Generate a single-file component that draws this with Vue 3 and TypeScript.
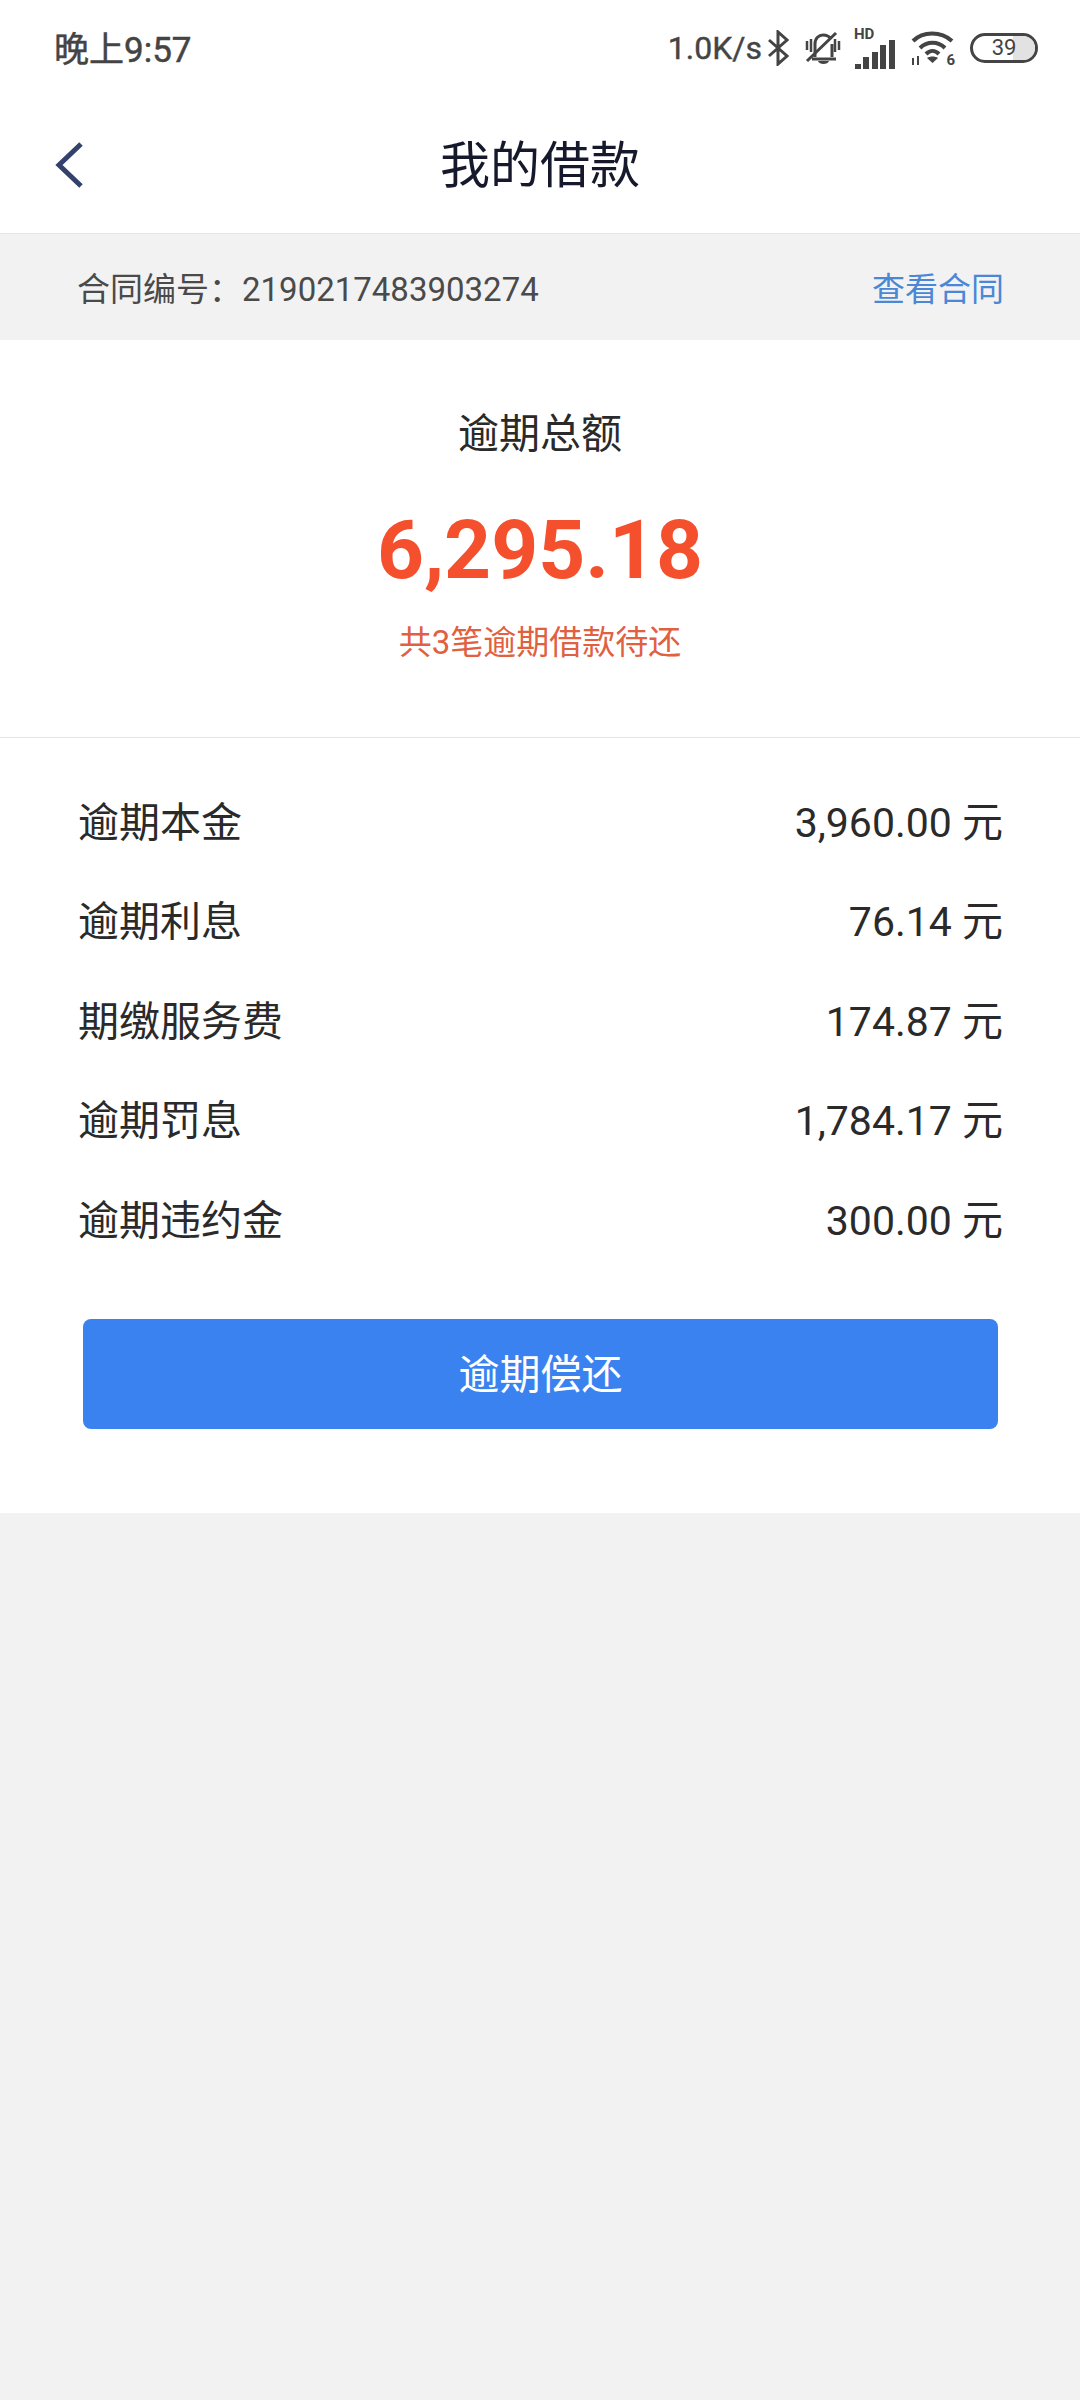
<script setup lang="ts">
interface FeeRow {
  label: string
  value: string
}

const feeRows: FeeRow[] = [
  { label: '逾期本金', value: '3,960.00 元' },
  { label: '逾期利息', value: '76.14 元' },
  { label: '期缴服务费', value: '174.87 元' },
  { label: '逾期罚息', value: '1,784.17 元' },
  { label: '逾期违约金', value: '300.00 元' },
]

const signalBars = [
  { x: 1, y: 24, h: 5 },
  { x: 9, y: 17, h: 12 },
  { x: 18, y: 12, h: 17 },
  { x: 26, y: 5, h: 24 },
  { x: 35, y: 0, h: 29 },
]
</script>

<template>
  <div class="page">
    <div class="status-bar">
      <span class="time">晚上9:57</span>
      <div class="status-icons">
        <span class="speed">1.0K/s</span>
        <svg class="ic-bt" width="21" height="36" viewBox="0 0 21 36" fill="none" stroke="#444" stroke-width="3">
          <path d="M1 10 L19 26 L10 34 V2 L19 10 L1 26" />
        </svg>
        <svg class="ic-bell" width="36" height="34" viewBox="0 0 36 34" fill="none" stroke="#444" stroke-width="3">
          <path d="M10 26 V13 C10 7 14 4 18 4 C21 4 24 5 26 8" />
          <path d="M27 13 V26" />
          <path d="M7 28 H31" />
          <path d="M13 30 H24 C23 34 14 34 13 30 Z" fill="#444" stroke="none" />
          <path d="M2 10 V19 M6 8 V21 M34 10 V19 M30 8 V21" stroke-width="2.500" />
          <path d="M2 30 L31 2" />
        </svg>
        <div class="signal">
          <span class="hd">HD</span>
          <svg class="signal-bars" width="42" height="29" viewBox="0 0 42 29">
            <rect
              v-for="bar in signalBars"
              :key="bar.x"
              :x="bar.x"
              :y="bar.y"
              width="6"
              :height="bar.h"
              fill="#444"
            />
          </svg>
        </div>
        <div class="wifi">
          <svg width="44" height="36" viewBox="0 0 44 36" fill="none" stroke="#444" stroke-width="4">
            <path d="M2 11 C12 1 30 1 41 11" />
            <path d="M9 18 C16 11 27 11 34 18" />
            <path d="M15 24 C19 20 24 20 28 24" />
            <path d="M21.500 33 L16 28 C19 26 24 26 27 28 Z" fill="#444" stroke="none" />
            <path d="M2 28 V35 M7 26 V35" stroke-width="2" />
          </svg>
          <span class="wifi-six">6</span>
        </div>
        <div class="battery">
          <span class="battery-fill"></span>
          <span class="battery-num">39</span>
        </div>
      </div>
    </div>

    <header class="nav-bar">
      <svg class="back" width="30" height="48" viewBox="0 0 30 48" fill="none" stroke="#33416b" stroke-width="5">
        <path d="M27 3 L5 24 L27 45" />
      </svg>
      <h1 class="nav-title">我的借款</h1>
    </header>

    <div class="contract-bar">
      <span class="contract-no">合同编号：2190217483903274</span>
      <span class="contract-link">查看合同</span>
    </div>

    <section class="card">
      <div class="summary">
        <div class="summary-label">逾期总额</div>
        <div class="summary-amount">6,295.18</div>
        <div class="summary-note">共3笔逾期借款待还</div>
      </div>

      <div class="fee-list">
        <div v-for="row in feeRows" :key="row.label" class="fee-row">
          <span>{{ row.label }}</span>
          <span>{{ row.value }}</span>
        </div>
      </div>

      <div class="repay-btn">逾期偿还</div>
    </section>
  </div>
</template>

<style>
html,
body {
  margin: 0;
  background: #f2f2f2;
}
</style>

<style scoped>
.page {
  width: 1080px;
  height: 2400px;
  background: #f2f2f2;
  font-family: Roboto, "Noto Sans CJK SC", sans-serif;
  color: #222;
  overflow: hidden;
}

.status-bar {
  height: 96px;
  padding: 0 42px 0 54px;
  background: #fff;
  display: flex;
  align-items: center;
  justify-content: space-between;
  color: #444;
  box-sizing: border-box;
}

.time {
  font-size: 35px;
  position: relative;
  top: -2px;
  -webkit-text-stroke: 0.5px #444;
}

.status-icons {
  display: flex;
  align-items: center;
}

.speed {
  font-size: 32px;
  margin-right: 6px;
  -webkit-text-stroke: 0.4px #444;
}

.ic-bell {
  margin-left: 16px;
}

.signal {
  position: relative;
  width: 42px;
  height: 42px;
  margin-left: 13px;
  display: flex;
  align-items: flex-end;
}

.hd {
  position: absolute;
  left: 0;
  top: -1px;
  font-size: 15px;
  font-weight: 700;
  line-height: 16px;
}

.wifi {
  position: relative;
  width: 44px;
  height: 36px;
  margin-left: 15px;
}

.wifi-six {
  position: absolute;
  right: 0;
  bottom: -2px;
  font-size: 15px;
  font-weight: 700;
  line-height: 15px;
}

.battery {
  position: relative;
  width: 62px;
  height: 24px;
  border: 3px solid #444;
  border-radius: 15px;
  overflow: hidden;
  text-align: center;
  margin-left: 15px;
}

.battery-fill {
  position: absolute;
  top: 0;
  right: 0;
  width: 22px;
  height: 100%;
  background: #e2e2e2;
}

.battery-num {
  position: relative;
  font-size: 22px;
  line-height: 24px;
  display: block;
}

.nav-bar {
  position: relative;
  height: 137px;
  background: #fff;
  border-bottom: 1px solid #e6e6e6;
  display: flex;
  align-items: center;
  justify-content: center;
}

.back {
  position: absolute;
  left: 54px;
  top: 45px;
}

.nav-title {
  margin: 0 0 8px;
  font-size: 50px;
  font-weight: 400;
  color: #15192b;
}

.contract-bar {
  height: 106px;
  padding: 0 76px 0 77px;
  display: flex;
  align-items: center;
  justify-content: space-between;
  font-size: 33px;
}

.contract-no {
  color: #4a4a4a;
}

.contract-link {
  color: #4a88d6;
}

.card {
  background: #fff;
  height: 1173px;
}

.summary {
  height: 397px;
  border-bottom: 1px solid #e4e4e4;
  text-align: center;
  display: flex;
  flex-direction: column;
  align-items: center;
}

.summary-label {
  margin-top: 66px;
  font-size: 41px;
  line-height: 56px;
  color: #2a2a2a;
}

.summary-amount {
  margin-top: 36px;
  font-size: 82px;
  font-weight: 700;
  line-height: 104px;
  color: #f5502d;
}

.summary-note {
  margin-top: 17px;
  font-size: 33px;
  line-height: 48px;
  color: #e0603f;
}

.fee-list {
  padding: 31px 77px 0 78px;
}

.fee-row {
  height: 99.500px;
  display: flex;
  align-items: center;
  justify-content: space-between;
  font-size: 41px;
  color: #2a2a2a;
}

.repay-btn {
  margin: 52px 82px 0 83px;
  height: 110px;
  padding-bottom: 5px;
  box-sizing: border-box;
  border-radius: 8px;
  background: #3b82f1;
  color: #fff;
  font-size: 41px;
  display: flex;
  align-items: center;
  justify-content: center;
}
</style>
